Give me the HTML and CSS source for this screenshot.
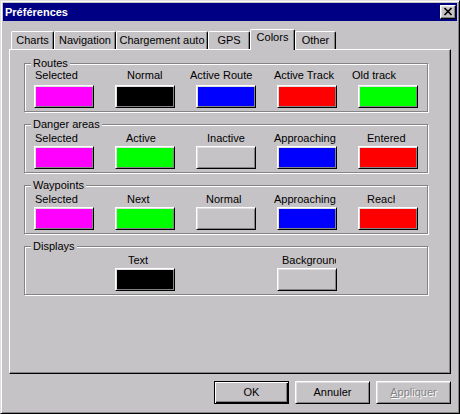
FILE: index.html
```html
<!DOCTYPE html>
<html lang="fr">
<head>
<meta charset="utf-8">
<title>Préférences</title>
<link rel="stylesheet" href="styles.css">
</head>
<body>
<div class="window">
  <div class="titlebar">
    <span class="title">Préférences</span>
    <span class="close">
      <svg width="10" height="9" viewBox="0 0 10 9"><path d="M1.5 1 L8.5 8 M8.5 1 L1.5 8" stroke="#000" stroke-width="1.7" fill="none"/></svg>
    </span>
  </div>

  <div class="tabs">
    <div class="tab w-charts">Charts</div>
    <div class="tab w-nav">Navigation</div>
    <div class="tab w-charg">Chargement auto</div>
    <div class="tab w-gps">GPS</div>
    <div class="tab w-colors selected">Colors</div>
    <div class="tab w-other">Other</div>
  </div>

  <div class="panel">
    <div class="group routes">
      <span class="group-title">Routes</span>
      <div class="grid">
        <div class="lab o1">Selected</div>
        <div class="lab o12">Normal</div>
        <div class="lab om6">Active Route</div>
        <div class="lab om3">Active Track</div>
        <div class="lab om6">Old track</div>
        <div class="sw c-mag"></div>
        <div class="sw c-blk"></div>
        <div class="sw c-blu"></div>
        <div class="sw c-red"></div>
        <div class="sw c-grn"></div>
      </div>
    </div>

    <div class="group">
      <span class="group-title">Danger areas</span>
      <div class="grid">
        <div class="lab o1">Selected</div>
        <div class="lab o11">Active</div>
        <div class="lab o11">Inactive</div>
        <div class="lab om3">Approaching</div>
        <div class="lab o9">Entered</div>
        <div class="sw c-mag"></div>
        <div class="sw c-grn"></div>
        <div class="sw c-gry"></div>
        <div class="sw c-blu"></div>
        <div class="sw c-red"></div>
      </div>
    </div>

    <div class="group">
      <span class="group-title">Waypoints</span>
      <div class="grid">
        <div class="lab o1">Selected</div>
        <div class="lab o12">Next</div>
        <div class="lab o10">Normal</div>
        <div class="lab om3">Approaching</div>
        <div class="lab o9 clip-reach">Reach</div>
        <div class="sw c-mag"></div>
        <div class="sw c-grn"></div>
        <div class="sw c-gry"></div>
        <div class="sw c-blu"></div>
        <div class="sw c-red"></div>
      </div>
    </div>

    <div class="group">
      <span class="group-title">Displays</span>
      <div class="grid">
        <div class="lab"></div>
        <div class="lab o13">Text</div>
        <div class="lab"></div>
        <div class="lab o5 clip-bg">Background</div>
        <div class="lab"></div>
        <div class="empty"></div>
        <div class="sw c-blk"></div>
        <div class="empty"></div>
        <div class="sw c-gry"></div>
        <div class="empty"></div>
      </div>
    </div>
  </div>

  <div class="buttons">
    <div class="btn default">OK</div>
    <div class="btn">Annuler</div>
    <div class="btn disabled"><u>A</u>ppliquer</div>
  </div>
</div>
</body>
</html>
```

FILE: styles.css
```css
* { box-sizing: border-box; }

html, body {
  margin: 0;
  padding: 0;
  background: #c6c3c6;
}

body {
  font-family: "Liberation Sans", Arial, sans-serif;
  font-size: 11px;
  line-height: 13px;
  color: #000;
}

.window {
  width: 460px;
  height: 414px;
  background: #c6c3c6;
  border: 1px solid;
  border-color: #dedfde #000 #000 #dedfde;
  box-shadow: inset 1px 1px 0 #fff, inset -1px -1px 0 #848484;
  padding: 2px;
}

/* title bar */
.titlebar {
  height: 18px;
  background: #000084;
  color: #fff;
  display: flex;
  align-items: center;
  justify-content: space-between;
  padding: 0 1px 0 2px;
}

.title {
  font-weight: bold;
  font-size: 11px;
}

.close {
  width: 16px;
  height: 14px;
  background: #c6c3c6;
  border: 1px solid;
  border-color: #fff #000 #000 #fff;
  box-shadow: inset -1px -1px 0 #848484, inset 1px 1px 0 #dedfde;
  display: flex;
  align-items: center;
  justify-content: center;
  padding: 0 0 1px 0;
}

.close svg { display: block; }

/* tabs */
.tabs {
  display: flex;
  align-items: flex-end;
  height: 20px;
  margin: 8px 0 0 6px;
  padding-left: 2px;
}

.tab {
  height: 18px;
  padding-top: 2px;
  text-align: center;
  white-space: nowrap;
  border-top: 1px solid #fff;
  border-left: 1px solid #fff;
  border-right: 1px solid #000;
  border-radius: 2px 2px 0 0;
  box-shadow: inset -1px 0 0 #848484;
  background: #c6c3c6;
}

.tab.selected {
  height: 21px;
  padding-top: 1px;
  margin-bottom: -1px;
  position: relative;
  z-index: 1;
}

.w-charts { width: 43px; }
.w-nav { width: 62px; }
.w-charg { width: 92px; }
.w-gps { width: 42px; }
.w-colors { width: 45px; }
.w-other { width: 41px; }

/* panel */
.panel {
  width: 442px;
  height: 325px;
  margin-left: 6px;
  border: 1px solid;
  border-color: #fff #000 #000 #fff;
  box-shadow: inset -1px -1px 0 #848484;
  padding: 13px 0 0 14px;
  display: flex;
  flex-direction: column;
  gap: 12px;
}

/* group boxes */
.group {
  position: relative;
  width: 404px;
  height: 49px;
  border: 1px solid #848484;
  box-shadow: 1px 1px 0 #fff, inset 1px 1px 0 #fff;
  padding: 7px 0 0 9px;
}

.group.routes { padding-top: 5px; }

.group-title {
  position: absolute;
  top: -7px;
  left: 6px;
  padding: 0 2px;
  background: #c6c3c6;
  white-space: nowrap;
}

.grid {
  display: grid;
  grid-template-columns: repeat(5, 60px);
  grid-template-rows: 13px 23px;
  column-gap: 21px;
  row-gap: 1px;
}

.routes .grid { row-gap: 3px; }

.lab {
  white-space: nowrap;
  height: 13px;
}

.o1 { margin-left: 1px; }
.o5 { margin-left: 5px; }
.o9 { margin-left: 9px; }
.o10 { margin-left: 10px; }
.o11 { margin-left: 11px; }
.o12 { margin-left: 12px; }
.o13 { margin-left: 13px; }
.om3 { margin-left: -3px; }
.om6 { margin-left: -6px; }

.clip-reach { width: 28px; overflow: hidden; }
.clip-bg { width: 54px; overflow: hidden; }

.sw {
  width: 60px;
  height: 23px;
  border: 1px solid;
  border-color: #fff #000 #000 #fff;
  box-shadow: inset 1px 1px 0 #dedfde, inset -1px -1px 0 #848484;
}

.c-mag { background: #ff00ff; }
.c-blk { background: #000; }
.c-blu { background: #0000ff; }
.c-red { background: #ff0000; }
.c-grn { background: #00ff00; }
.c-gry { background: #c6c3c6; }

/* bottom buttons */
.buttons {
  display: flex;
  justify-content: flex-end;
  gap: 6px;
  margin-top: 7px;
  padding-right: 6px;
}

.btn {
  width: 75px;
  height: 23px;
  display: flex;
  align-items: center;
  justify-content: center;
  border: 1px solid;
  border-color: #fff #000 #000 #fff;
  box-shadow: inset 1px 1px 0 #dedfde, inset -1px -1px 0 #848484;
}

.btn.default {
  border-color: #000;
  box-shadow: inset 1px 1px 0 #fff, inset -1px -1px 0 #000, inset -2px -2px 0 #848484;
}

.btn.disabled {
  color: #848484;
  text-shadow: 1px 1px 0 #fff;
}
```
